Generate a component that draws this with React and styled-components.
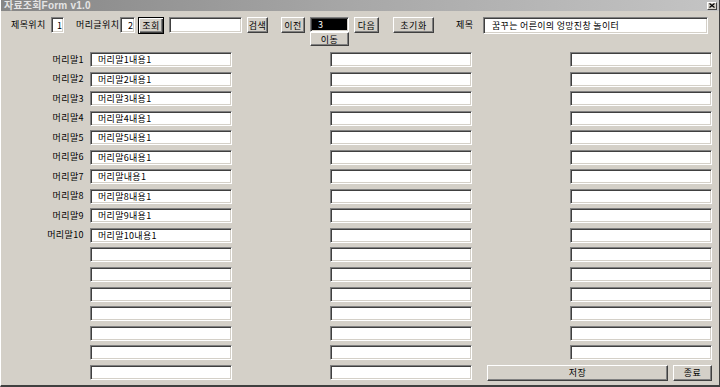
import React from "react";
import styled, { createGlobalStyle, css } from "styled-components";

const Global = createGlobalStyle`
  html, body { margin: 0; padding: 0; background: #d4d0c8; overflow: hidden; }
  * { box-sizing: border-box; }
`;

const FONT = `"Noto Sans CJK KR", "Liberation Sans", sans-serif`;

const Window = styled.div`
  width: 720px;
  height: 387px;
  background: #d4d0c8;
  border-left: 1px solid #ffffff;
  border-right: 1px solid #404040;
  border-bottom: 2px solid #404040;
  display: flex;
  flex-direction: column;
  font-family: ${FONT};
  color: #000;
`;

const TitleBar = styled.div`
  height: 11px;
  flex: none;
  display: flex;
  align-items: center;
  justify-content: space-between;
  padding: 0 2px 0 3px;
  background: linear-gradient(90deg, #868686 0%, #a8a8a8 50%, #c4c4c4 100%);
`;

const TitleText = styled.span`
  font-family: "Liberation Sans", "Noto Sans CJK KR", sans-serif;
  font-weight: bold;
  font-size: 10px;
  line-height: 11px;
  color: #e4e4e4;
  letter-spacing: 0.2px;
`;

const CloseBox = styled.div`
  width: 10px;
  height: 8px;
  background: #d4d0c8;
  border: 1px solid;
  border-color: #ffffff #404040 #404040 #ffffff;
  display: flex;
  align-items: center;
  justify-content: center;
`;

const Toolbar = styled.div`
  display: flex;
  align-items: flex-start;
  margin-top: 6px;
  flex: none;
`;

const Label = styled.span`
  flex: none;
  width: ${(p) => p.$w}px;
  margin-left: ${(p) => p.$ml || 0}px;
  height: 16px;
  font-size: 9px;
  line-height: 16px;
  white-space: nowrap;
  letter-spacing: 0.4px;
`;

const sunken = css`
  border: 1px solid;
  border-color: #808080 #ffffff #ffffff #808080;
  box-shadow: inset 1px 1px 0 #404040, inset -1px -1px 0 #d4d0c8;
`;

const Field = styled.input`
  flex: none;
  display: block;
  width: ${(p) => p.$w}px;
  height: ${(p) => p.$h || 15}px;
  margin: 0 0 0 ${(p) => p.$ml || 0}px;
  padding: 0 0 0 ${(p) => p.$pl ?? 6}px;
  ${sunken}
  background: ${(p) => (p.$dark ? "#000000" : "#ffffff")};
  color: ${(p) => (p.$dark ? "#ffffff" : "#000000")};
  font-family: ${FONT};
  font-size: 9px;
  letter-spacing: 0.3px;
  outline: none;
`;

const Button = styled.button`
  flex: none;
  display: flex;
  align-items: center;
  justify-content: center;
  width: ${(p) => p.$w}px;
  height: ${(p) => p.$h || 16}px;
  margin: 0 0 0 ${(p) => p.$ml || 0}px;
  padding: 0;
  background: #d4d0c8;
  border: 1px solid;
  border-color: #ffffff #404040 #404040 #ffffff;
  box-shadow: inset -1px -1px 0 #808080;
  font-family: ${FONT};
  font-size: 9px;
  color: #000;
  letter-spacing: 0.5px;
  ${(p) =>
    p.$default &&
    css`
      border: 1px solid #000;
      box-shadow: inset 1px 1px 0 #ffffff, inset -1px -1px 0 #404040, inset -2px -2px 0 #808080;
    `}
`;

const NavGroup = styled.div`
  flex: none;
  display: flex;
  flex-direction: column;
  margin-left: ${(p) => p.$ml}px;
  width: 39px;
`;

const Grid = styled.div`
  display: grid;
  grid-template-columns: 89px 240px 142px 98px 142px;
  grid-auto-rows: 15px;
  row-gap: 4.56px;
  margin-top: 6px;
`;

const RowLabel = styled.span`
  grid-row: ${(p) => p.$row};
  grid-column: 1;
  align-self: center;
  justify-self: end;
  padding-right: 6px;
  font-size: 9px;
  line-height: 12px;
  letter-spacing: 0.4px;
  white-space: nowrap;
`;

const Cell = styled(Field)`
  grid-row: ${(p) => p.$row};
  grid-column: ${(p) => p.$col};
  width: 142px;
  height: 15px;
  padding-left: 7px;
`;

const ButtonBar = styled.div`
  grid-row: ${(p) => p.$row};
  grid-column: 4 / 6;
  display: flex;
  justify-content: flex-end;
  gap: 5px;
`;

const rowTexts = [
  "머리말1내용1",
  "머리말2내용1",
  "머리말3내용1",
  "머리말4내용1",
  "머리말5내용1",
  "머리말6내용1",
  "머리말내용1",
  "머리말8내용1",
  "머리말9내용1",
  "머리말10내용1",
];

export default function App() {
  const rows = Array.from({ length: 17 }, (_, i) => i);
  return (
    <>
      <Global />
      <Window>
        <TitleBar>
          <TitleText>자료조회Form v1.0</TitleText>
          <CloseBox>
            <svg width="6" height="5" viewBox="0 0 6 5">
              <path d="M0.5 0.5 L5.5 4.5 M5.5 0.5 L0.5 4.5" stroke="#000" strokeWidth="1.2" />
            </svg>
          </CloseBox>
        </TitleBar>

        <Toolbar>
          <Label $w={37} $ml={10}>제목위치</Label>
          <Field $w={13} $h={16} $ml={3} $pl={5} readOnly value="1" />
          <Label $w={41} $ml={12}>머리글위치</Label>
          <Field $w={15} $h={16} $ml={3} $pl={7} readOnly value="2" />
          <Button $w={26} $h={17} $ml={3} $default>조회</Button>
          <Field $w={73} $h={16} $ml={5} readOnly value="" />
          <Button $w={21} $ml={5}>검색</Button>
          <Button $w={24} $ml={13}>이전</Button>
          <NavGroup $ml={5}>
            <Field $w={39} $h={15} $pl={7} $dark readOnly value="3" />
            <Button $w={39} $h={14}>이동</Button>
          </NavGroup>
          <Button $w={25} $ml={5}>다음</Button>
          <Button $w={41} $ml={14}>초기화</Button>
          <Label $w={18} $ml={22}>제목</Label>
          <Field $w={225} $h={17} $ml={9} $pl={8} readOnly value="꿈꾸는 어른이의 엉망진창 놀이터" />
        </Toolbar>

        <Grid>
          {rows.map((r) => (
            <React.Fragment key={r}>
              {r < 10 && <RowLabel $row={r + 1}>{`머리말${r + 1}`}</RowLabel>}
              <Cell $row={r + 1} $col={2} readOnly value={r < 10 ? rowTexts[r] : ""} />
              <Cell $row={r + 1} $col={3} readOnly value="" />
              {r < 16 && <Cell $row={r + 1} $col={5} readOnly value="" />}
            </React.Fragment>
          ))}
          <ButtonBar $row={17}>
            <Button $w={181} $h={16}>저장</Button>
            <Button $w={39} $h={16}>종료</Button>
          </ButtonBar>
        </Grid>
      </Window>
    </>
  );
}
